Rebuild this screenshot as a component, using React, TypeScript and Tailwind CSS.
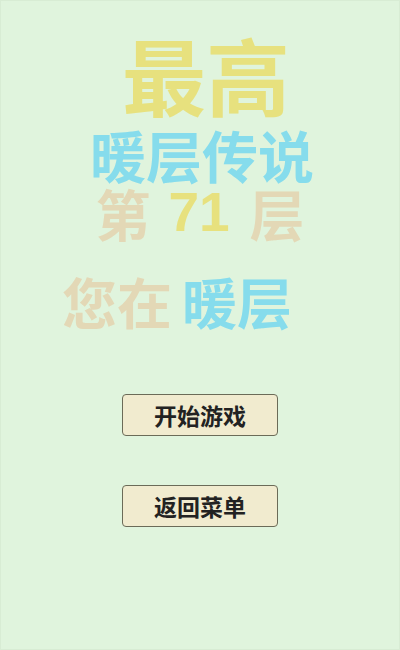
import React from "react";

const cjk = "font-['Noto_Sans_CJK_SC','Noto_Sans',sans-serif]";

const MenuButton: React.FC<{ label: string }> = ({ label }) => (
  <button className="w-[156px] h-[42px] rounded-[4px] border border-[#6b6b58] bg-[#f1ebcf] text-[23px] font-bold text-[#222] leading-none">
    {label}
  </button>
);

export default function App() {
  return (
    <div className={`w-[400px] h-[650px] bg-[#e0f4dd] border border-[#d8ecd4] flex flex-col items-center ${cjk}`}>
      <div className="mt-[31px] ml-[12px] text-[84px] leading-none font-bold text-[#e7e17e]">最高</div>
      <div className="mt-[10px] ml-[4px] text-[56px] leading-none font-bold text-[#86dcec]">暖层传说</div>
      <div className="mt-[3px] text-[55px] leading-none font-bold text-[#e3d8b6] flex items-center">
        <span>第</span>
        <span className="ml-[18px] text-[#e7e17e] font-['Liberation_Sans',sans-serif]">71</span>
        <span className="ml-[20px]">层</span>
      </div>
      <div className="mt-[33px] w-full pl-[61px] text-[55px] leading-none font-bold">
        <span className="text-[#e3d8b6]">您在</span>
        <span className="ml-[10px] text-[#86dcec]">暖层</span>
      </div>
      <div className="mt-[66px]">
        <MenuButton label="开始游戏" />
      </div>
      <div className="mt-[49px]">
        <MenuButton label="返回菜单" />
      </div>
    </div>
  );
}
